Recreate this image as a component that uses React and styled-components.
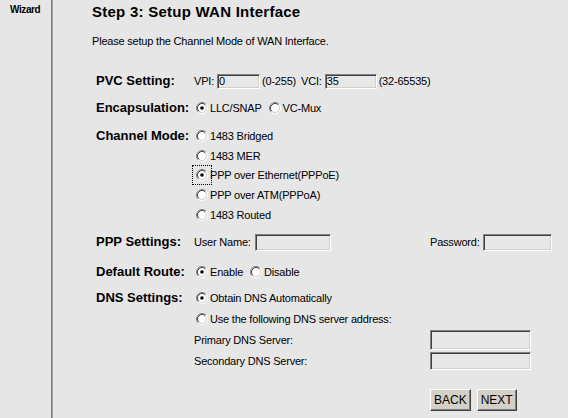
import React from 'react'
import styled, { createGlobalStyle } from 'styled-components'

const GlobalStyle = createGlobalStyle`
    body {
        margin: 0;
        background: #e6e6e6;
        font-family: "Liberation Sans", Arial, sans-serif;
        color: #000;
    }
`

const Radio = ({ checked, focus, children, first }) => (
    <RadioItem $first={first}>
        <RadioBox $focus={focus}>
            <svg width="12" height="12" viewBox="0 0 12 12">
                <circle cx="6" cy="6" r="4.5" fill="#ffffff" />
                <path d="M2.11 9.89 A5.5 5.5 0 0 1 9.89 2.11" stroke="#808080" fill="none" />
                <path d="M9.89 2.11 A5.5 5.5 0 0 1 2.11 9.89" stroke="#ffffff" fill="none" />
                <path d="M2.82 9.18 A4.5 4.5 0 0 1 9.18 2.82" stroke="#404040" fill="none" />
                <path d="M9.18 2.82 A4.5 4.5 0 0 1 2.82 9.18" stroke="#d4d0c8" fill="none" />
                {checked && <circle cx="6" cy="6" r="1.8" fill="#000" />}
            </svg>
        </RadioBox>
        <span>{children}</span>
    </RadioItem>
)

const App = () => {
    return (
        <>
            <GlobalStyle />
            <Page>
                <Sidebar>Wizard</Sidebar>
                <Main>
                    <Title>Step 3: Setup WAN Interface</Title>
                    <Intro>Please setup the Channel Mode of WAN Interface.</Intro>
                    <Form>
                        <Section $mt={0}>
                            <Label>PVC Setting:</Label>
                            <Values>
                                <Line>
                                    <Small>VPI:</Small>
                                    <TextBox $w={43} $ml={3} defaultValue="0" />
                                    <Small>(0-255)</Small>
                                    <Small $ml={5}>VCI:</Small>
                                    <TextBox $w={52} $ml={3} defaultValue="35" />
                                    <Small>(32-65535)</Small>
                                </Line>
                            </Values>
                        </Section>

                        <Section $mt={7}>
                            <Label>Encapsulation:</Label>
                            <Values>
                                <Line>
                                    <Radio first checked>LLC/SNAP</Radio>
                                    <Radio>VC-Mux</Radio>
                                </Line>
                            </Values>
                        </Section>

                        <Section $mt={8}>
                            <Label>Channel Mode:</Label>
                            <Values>
                                <Line><Radio first>1483 Bridged</Radio></Line>
                                <Line $h={19}><Radio first>1483 MER</Radio></Line>
                                <Line><Radio first checked focus>PPP over Ethernet(PPPoE)</Radio></Line>
                                <Line><Radio first>PPP over ATM(PPPoA)</Radio></Line>
                                <Line $h={19}><Radio first>1483 Routed</Radio></Line>
                            </Values>
                        </Section>

                        <Section $mt={8}>
                            <Label>PPP Settings:</Label>
                            <Values>
                                <SplitLine>
                                    <Cell>
                                        <Small>User Name:</Small>
                                        <TextBox $w={76} $h={17} $ml={4} />
                                    </Cell>
                                    <Cell>
                                        <Small>Password:</Small>
                                        <TextBox $w={69} $h={17} $ml={3} />
                                    </Cell>
                                </SplitLine>
                            </Values>
                        </Section>

                        <Section $mt={10}>
                            <Label>Default Route:</Label>
                            <Values>
                                <Line>
                                    <Radio first checked>Enable</Radio>
                                    <Radio>Disable</Radio>
                                </Line>
                            </Values>
                        </Section>

                        <Section $mt={6}>
                            <Label>DNS Settings:</Label>
                            <Values>
                                <Line><Radio first checked>Obtain DNS Automatically</Radio></Line>
                                <Line $mt={1}><Radio first>Use the following DNS server address:</Radio></Line>
                                <SplitLine $mt={1}>
                                    <Cell><Small>Primary DNS Server:</Small></Cell>
                                    <Cell><TextBox $w={101} $h={20} /></Cell>
                                </SplitLine>
                                <SplitLine $mt={1}>
                                    <Cell><Small>Secondary DNS Server:</Small></Cell>
                                    <Cell><TextBox $w={101} $h={18} /></Cell>
                                </SplitLine>
                                <SplitLine $mt={18} $h={22}>
                                    <Cell />
                                    <Cell>
                                        <Button>BACK</Button>
                                        <Button $ml={6}>NEXT</Button>
                                    </Cell>
                                </SplitLine>
                            </Values>
                        </Section>
                    </Form>
                </Main>
            </Page>
        </>
    )
}

export default App

const Page = styled.div`
    display: flex;
    height: 418px;
    overflow: hidden;
`

const Sidebar = styled.div`
    width: 41px;
    padding: 4px 0 0 10px;
    border-right: 1px solid #7c7c7c;
    box-shadow: 1px 0 0 #a4a4a4;
    font-size: 10px;
    font-weight: bold;
    line-height: 12px;
    letter-spacing: -0.4px;
`

const Main = styled.div`
    flex: 1;
    padding-left: 40px;
`

const Title = styled.div`
    margin-top: 3px;
    font-size: 15px;
    font-weight: bold;
    line-height: 17px;
    letter-spacing: 0.25px;
`

const Intro = styled.div`
    margin-top: 14px;
    font-size: 11px;
    line-height: 14px;
    letter-spacing: -0.2px;
`

const Form = styled.div`
    margin: 23px 0 0 4px;
`

const Section = styled.div`
    display: flex;
    margin-top: ${p => p.$mt}px;
`

const Label = styled.div`
    width: 98px;
    height: 20px;
    line-height: 20px;
    font-size: 13px;
    font-weight: bold;
    white-space: nowrap;
`

const Values = styled.div`
    flex: 1;
    display: flex;
    flex-direction: column;
`

const Line = styled.div`
    display: flex;
    align-items: center;
    height: ${p => p.$h || 20}px;
    margin-top: ${p => p.$mt || 0}px;
    font-size: 11px;
    letter-spacing: -0.2px;
    white-space: nowrap;
`

const SplitLine = styled(Line)`
    display: grid;
    grid-template-columns: 236px auto;
`

const Cell = styled.div`
    display: flex;
    align-items: center;
`

const Small = styled.span`
    font-size: 11px;
    margin-left: ${p => p.$ml || 0}px;
`

const TextBox = styled.input`
    box-sizing: border-box;
    width: ${p => p.$w}px;
    height: ${p => p.$h || 15}px;
    margin: 0 2px 0 ${p => p.$ml || 0}px;
    padding: 0 1px;
    background: #e8e8e8;
    border: 1px solid;
    border-color: #808080 #ffffff #ffffff #808080;
    box-shadow: inset 1px 1px 0 #404040, inset -1px -1px 0 #d4d0c8;
    font-family: "Liberation Sans", Arial, sans-serif;
    font-size: 11px;
    line-height: 12px;
    outline: none;
`

const RadioItem = styled.label`
    display: flex;
    align-items: center;
    margin-left: ${p => (p.$first ? 1 : 6)}px;
`

const RadioBox = styled.span`
    display: flex;
    padding: 1px;
    margin-right: 1px;
    outline: ${p => (p.$focus ? '1px dotted #000' : 'none')};
    outline-offset: ${p => (p.$focus ? '2px' : '0')};
`

const Button = styled.button`
    box-sizing: border-box;
    height: 22px;
    margin-left: ${p => p.$ml || 0}px;
    padding: 0 3px;
    background: #d4d0c8;
    border: 1px solid;
    border-color: #ffffff #404040 #404040 #ffffff;
    box-shadow: inset -1px -1px 0 #808080;
    font-family: "Liberation Sans", Arial, sans-serif;
    font-size: 12px;
    color: #000;
`
